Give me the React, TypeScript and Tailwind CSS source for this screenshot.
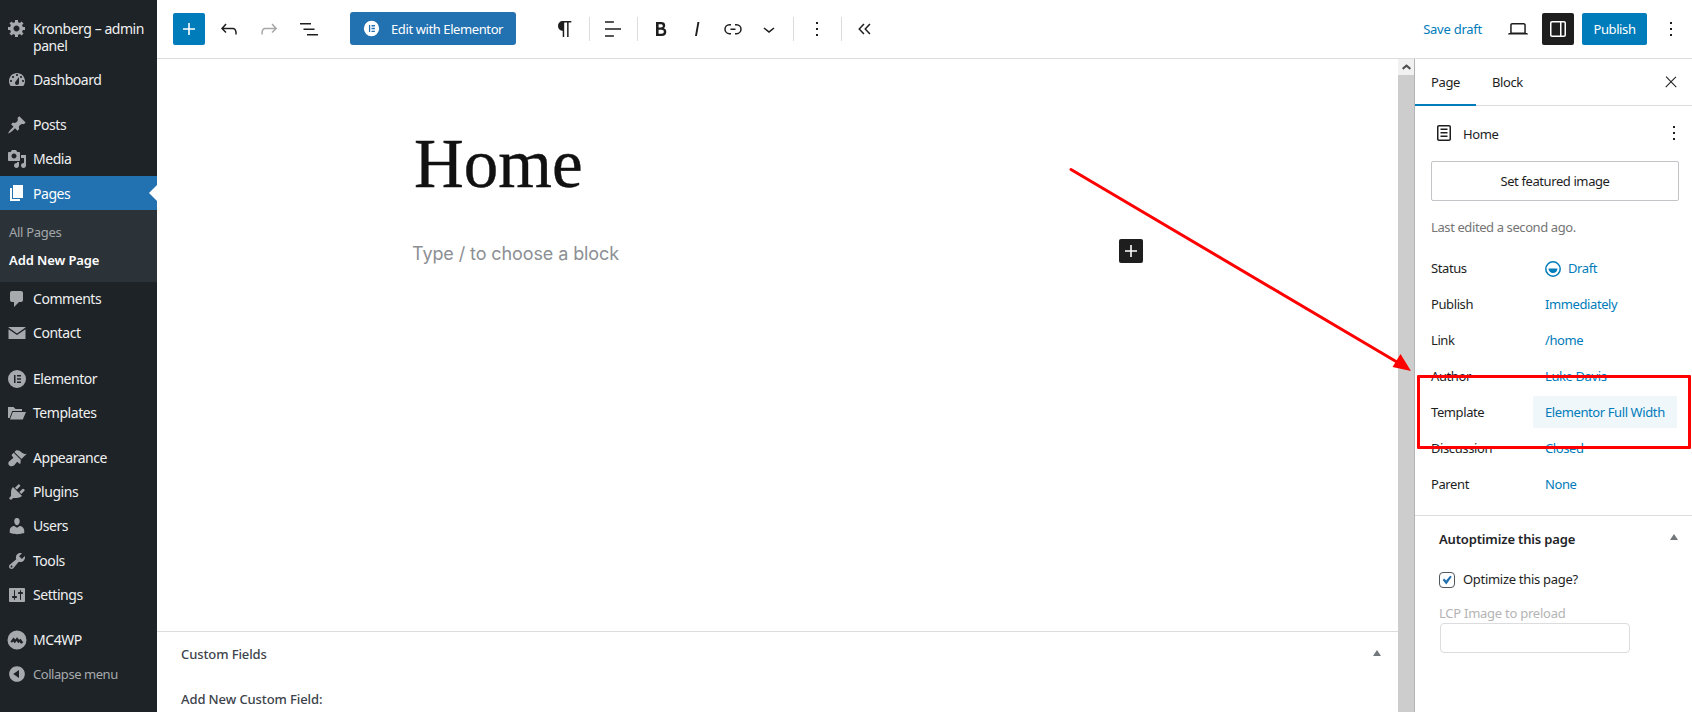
import React from "react";

const D = {
  gear: "M18 12h-2.18c-.17.7-.44 1.35-.81 1.93l1.54 1.54-2.1 2.1-1.54-1.54c-.58.36-1.23.63-1.91.79V19H8v-2.18c-.68-.16-1.33-.43-1.91-.79l-1.54 1.54-2.12-2.12 1.54-1.54c-.36-.58-.63-1.23-.79-1.91H1V9.03h2.17c.16-.7.44-1.35.8-1.94L2.43 5.55l2.1-2.1 1.54 1.54c.58-.37 1.24-.64 1.93-.81V2h3v2.18c.68.16 1.33.43 1.91.79l1.54-1.54 2.12 2.12-1.54 1.54c.36.59.64 1.24.8 1.94H18V12zm-8.5 1.5c1.66 0 3-1.34 3-3s-1.34-3-3-3-3 1.34-3 3 1.34 3 3 3z",
  dash: "M3.76 16h12.48c1.1-1.37 1.76-3.11 1.76-5 0-4.42-3.58-8-8-8s-8 3.58-8 8c0 1.89.66 3.63 1.76 5zM10 4c.55 0 1 .45 1 1s-.45 1-1 1-1-.45-1-1 .45-1 1-1zM6 6c.55 0 1 .45 1 1s-.45 1-1 1-1-.45-1-1 .45-1 1-1zm8 0c.55 0 1 .45 1 1s-.45 1-1 1-1-.45-1-1 .45-1 1-1zm-5.37 5.55L12 7v6c0 1.1-.9 2-2 2s-2-.9-2-2c0-.57.24-1.08.63-1.45zM4 10c.55 0 1 .45 1 1s-.45 1-1 1-1-.45-1-1 .45-1 1-1zm12 0c.55 0 1 .45 1 1s-.45 1-1 1-1-.45-1-1 .45-1 1-1z",
  pin: "M10.44 3.02l1.82-1.82 6.36 6.35-1.83 1.82c-1.05-.68-2.48-.57-3.41.36l-.75.75c-.92.93-1.04 2.35-.35 3.41l-1.83 1.82-2.41-2.41-2.8 2.79c-.42.42-3.38 2.71-3.8 2.29s1.86-3.39 2.28-3.81l2.79-2.79L4.1 9.36l1.83-1.82c1.05.69 2.48.57 3.4-.36l.75-.75c.93-.92 1.05-2.35.36-3.41z",
  media: "M13 11V4c0-.55-.45-1-1-1h-1.67L9 1H5L3.67 3H2c-.55 0-1 .45-1 1v7c0 .55.45 1 1 1h10c.55 0 1-.45 1-1zM7 4.5c1.38 0 2.5 1.12 2.5 2.5S8.38 9.5 7 9.5 4.5 8.38 4.5 7 5.62 4.5 7 4.5zM14 6h5v10.5c0 1.38-1.12 2.5-2.5 2.5S14 17.88 14 16.5s1.12-2.5 2.5-2.5c.17 0 .34.02.5.05V9h-3V6zm-4 8.05V13h2v3.5c0 1.38-1.12 2.5-2.5 2.5S7 17.88 7 16.5 8.12 14 9.5 14c.17 0 .34.02.5.05z",
  page: "M6 15V2h10v13H6zm-1 1h8v2H3V5h2v11z",
  comment: "M5 2h9c1.1 0 2 .9 2 2v7c0 1.1-.9 2-2 2h-2l-5 5v-5H5c-1.1 0-2-.9-2-2V4c0-1.1.9-2 2-2z",
  mail: "M1.5 4h17v.6L10 10.4 1.5 4.6zM1.5 6.3L10 12.1l8.5-5.8V16h-17z",
  elementor: "M10 1a9 9 0 1 0 0 18 9 9 0 0 0 0-18zM7 6h1.5v8H7zM10 6h4v1.5h-4zM10 9.25h4v1.5h-4zM10 12.5h4V14h-4z",
  folder: "M1 4h5.5l2 2H15v2H5.2L2.6 15H1zM5.8 9H19l-3.2 7.5H3z",
  brush: "M14.48 11.06L7.41 3.99l1.5-1.5c.5-.56 2.3-.47 3.51.32 1.21.8 1.43 1.28 2.91 2.1 1.18.64 2.45 1.26 4.45.85zm-.71.71L6.7 4.7 4.93 6.47c-.39.39-.39 1.02 0 1.41l1.06 1.06c.39.39.39 1.03 0 1.42-.6.6-1.43 1.11-2.21 1.69-.35.26-.7.53-1.01.84C1.43 13.23.78 15.6 1.82 17.1c.99 1.43 3.31 1.7 5.15.52.39-.31.66-.66.92-1.01.58-.78 1.09-1.61 1.69-2.21.39-.39 1.02-.39 1.41 0l1.06 1.06c.39.39 1.02.39 1.41 0z",
  plug: "M13.11 4.36L9.87 7.6 8 5.73l3.24-3.24c.35-.34 1.05-.2 1.56.32.52.51.66 1.21.31 1.55zm-8 1.77l.91-1.12 9.01 9.01-1.19.84c-.71.71-2.63 1.16-3.82 1.16H6.14L4.9 17.26c-.59.59-1.54.59-2.12 0-.59-.58-.59-1.53 0-2.12l1.24-1.24v-3.88c0-1.13.4-3.19 1.09-3.89zm7.26 3.97l3.24-3.24c.34-.35 1.04-.21 1.55.31.52.51.66 1.21.31 1.55l-3.24 3.25z",
  user: "M10 9.25c-2.27 0-2.73-3.44-2.73-3.44C7 4.02 7.82 2 9.97 2c2.16 0 2.98 2.02 2.71 3.81 0 0-.41 3.44-2.68 3.44zm0 2.57L12.72 10c2.39 0 4.52 2.33 4.52 4.53v2.49s-3.65 1.13-7.24 1.13c-3.65 0-7.24-1.13-7.24-1.13v-2.49c0-2.25 1.94-4.48 4.47-4.48z",
  tool: "M16.68 9.77c-1.34 1.34-3.3 1.67-4.95.99l-5.41 6.52c-.99.99-2.59.99-3.58 0s-.99-2.59 0-3.57l6.52-5.42c-.68-1.65-.35-3.61.99-4.95 1.28-1.28 3.12-1.62 4.72-1.06l-2.89 2.89 2.82 2.82 2.86-2.87c.53 1.58.18 3.39-1.08 4.65zM3.81 16.21c.4.39 1.04.39 1.43 0 .4-.4.4-1.04 0-1.43-.39-.4-1.03-.4-1.43 0-.39.39-.39 1.03 0 1.43z",
  settings: "M18 16V4c0-.55-.45-1-1-1H3c-.55 0-1 .45-1 1v12c0 .55.45 1 1 1h14c.55 0 1-.45 1-1zM8 11h1c.55 0 1 .45 1 1s-.45 1-1 1H8v1.5c0 .28-.22.5-.5.5s-.5-.22-.5-.5V13H6c-.55 0-1-.45-1-1s.45-1 1-1h1V5.5c0-.28.22-.5.5-.5s.5.22.5.5V11zm5-2h-1c-.55 0-1-.45-1-1s.45-1 1-1h1V5.5c0-.28.22-.5.5-.5s.5.22.5.5V7h1c.55 0 1 .45 1 1s-.45 1-1 1h-1v5.5c0 .28-.22.5-.5.5s-.5-.22-.5-.5V9z",
  mc: "M10 .5a9.5 9.5 0 1 0 0 19 9.5 9.5 0 0 0 0-19zM3.5 11.5L6.5 7.5l1.8 2 1.7-2.3 2.2 2.6 1.3-1 2.8 3.7-2.2 1.2-1.6-1.7-1 1.2-2-2.2-1.6 2.2-1.8-1.8-1.2 1.4z",
  collapse: "M10 2.16c4.33 0 7.84 3.51 7.84 7.84s-3.51 7.84-7.84 7.84S2.16 14.33 2.16 10 5.71 2.16 10 2.16zm2 11.72V6.12L6.18 9.97z",
};

const G = {
  plus: "M18 11.2h-5.2V6h-1.6v5.2H6v1.6h5.2V18h1.6v-5.2H18z",
  undo: "M18.3 11.7c-.6-.6-1.4-.9-2.3-.9H6.7l2.9-3.3-1.1-1-4.5 5L8.5 16l1-1-2.7-2.7H16c.5 0 .9.2 1.3.5 1 1 1 3.4 1 4.5v.3h1.5v-.2c0-1.5 0-4.3-1.5-5.7z",
  redo: "M15.6 6.5l-1.1 1 2.9 3.3H8c-.9 0-1.7.3-2.3.9-1.4 1.5-1.4 4.2-1.4 5.6v.2h1.5v-.3c0-1.1 0-3.5 1-4.5.3-.3.7-.5 1.3-.5h9.2L14.5 15l1.1 1.1 4.6-4.6-4.6-5z",
  list: "M3 6h11v1.5H3V6zm3.5 5.5h11V13h-11v-1.5zM21 17H10v1.5h11V17z",
  para: "M18.3 4H9.9v-.1l-.9.2c-2.3.4-4 2.4-4 4.8s1.7 4.4 4 4.8l.7.1V20h1.5V5.5h2.9V20h1.5V5.5h2.7V4z",
  align: "M4 19.8h8.9v-1.5H4v1.5zm8.9-15.6H4v1.5h8.9V4.2zm-8.9 7v1.5h16v-1.5H4z",
  bold: "M14.7 11.3c1-.6 1.5-1.6 1.5-3 0-2.3-1.3-3.4-4-3.4H7v14h5.8c1.4 0 2.5-.3 3.3-1 .8-.7 1.2-1.7 1.2-2.9.1-1.9-.8-3.1-2.6-3.7zm-5.1-4h2.3c.6 0 1.1.1 1.4.4.3.3.5.7.5 1.2s-.2 1-.5 1.2c-.3.3-.8.4-1.4.4H9.6V7.3zm4.6 9c-.4.3-1 .4-1.7.4H9.6v-3.9h2.9c.7 0 1.3.2 1.7.5.4.3.6.8.6 1.5s-.2 1.2-.6 1.5z",
  italic: "M12.5 5L10 19h1.9l2.5-14z",
  link: "M10 17.389H8.444A5.194 5.194 0 1 1 8.444 7H10v1.5H8.444a3.694 3.694 0 0 0 0 7.389H10v1.5ZM14 7h1.556a5.194 5.194 0 0 1 0 10.39H14v-1.5h1.556a3.694 3.694 0 0 0 0-7.39H14V7Zm-4.5 6h5v-1.5h-5V13Z",
  chev: "M17.5 11.6L12 16l-5.5-4.4.9-1.2L12 14l4.5-3.6 1 1.2z",
  more: "M13 19h-2v-2h2v2zm0-6h-2v-2h2v2zm0-6h-2V5h2v2z",
  collapse: "M11.4 6.5l-5.2 5.5 5.2 5.5 1.1-1-4.3-4.5 4.3-4.5zM17.4 6.5l-5.2 5.5 5.2 5.5 1.1-1-4.3-4.5 4.3-4.5z",
  laptop: "M20.5 16h-.7V8c0-1.1-.9-2-2-2H6.2c-1.1 0-2 .9-2 2v8h-.7c-.8 0-1.5.7-1.5 1.5h20c0-.8-.7-1.5-1.5-1.5zM5.7 8c0-.3.2-.5.5-.5h11.6c.3 0 .5.2.5.5v7.6H5.7V8z",
  sidebar: "M18 4H6c-1.1 0-2 .9-2 2v12c0 1.1.9 2 2 2h12c1.1 0 2-.9 2-2V6c0-1.1-.9-2-2-2zm-4 14.5H6c-.3 0-.5-.2-.5-.5V6c0-.3.2-.5.5-.5h8v13zm4.5-.5c0 .3-.2.5-.5.5h-2.5v-13H18c.3 0 .5.2.5.5v12z",
  doc: "M15.5 7.5h-7V9h7V7.5zm-7 3.5h7v1.5h-7V11zm7 3.5h-7V16h7v-1.5zM17 4H7c-1.1 0-2 .9-2 2v12c0 1.1.9 2 2 2h10c1.1 0 2-.9 2-2V6c0-1.1-.9-2-2-2zm.5 14c0 .3-.2.5-.5.5H7c-.3 0-.5-.2-.5-.5V6c0-.3.2-.5.5-.5h10c.3 0 .5.2.5.5v12z",
  close: "M13 11.8l6.1-6.3-1-1-6.1 6.2-6.1-6.3-1 1 6.1 6.3-6.5 6.7 1 1 6.5-6.6 6.5 6.6 1-1z",
};

function Dash({ d, className }: { d: string; className?: string }) {
  return (
    <svg viewBox="0 0 20 20" className={className ?? "w-5 h-5"} fill="currentColor" fillRule="evenodd">
      <path d={d} />
    </svg>
  );
}

function Gb({ d, size = 24, className }: { d: string; size?: number; className?: string }) {
  return (
    <svg viewBox="0 0 24 24" width={size} height={size} className={className} fill="currentColor">
      <path d={d} />
    </svg>
  );
}

function MenuItem({ icon, label, active, dim }: { icon: string; label: string; active?: boolean; dim?: boolean }) {
  return (
    <div className={`relative flex items-center h-[34px] ${active ? "bg-[#2271b1] text-white" : dim ? "text-[#a7aaad]" : "text-[#f0f0f1]"}`}>
      <span className={`w-[33px] flex justify-center pl-[1px] shrink-0 ${active ? "text-white" : "text-[#a7aaad]"}`}>
        <Dash d={icon} />
      </span>
      <span className={dim ? "text-[13px]" : active ? "pt-[1px]" : ""}>{label}</span>
      {active && (
        <span className="absolute right-0 top-[9px] w-0 h-0 border-y-[8px] border-y-transparent border-r-[8px] border-r-white" />
      )}
    </div>
  );
}

function Sidebar() {
  return (
    <aside className="w-[157px] shrink-0 bg-[#1d2327] text-[14px] leading-[18px] tracking-[-0.45px] h-[712px] overflow-hidden">
      <div className="flex h-[63px] pt-[20px] text-[#f0f0f1]">
        <span className="w-[33px] flex justify-center pl-[1px] text-[#a7aaad] shrink-0 h-5 mt-[-2px]">
          <Dash d={D.gear} />
        </span>
        <span className="w-[118px] leading-[17px]">Kronberg – admin panel</span>
      </div>
      <MenuItem icon={D.dash} label="Dashboard" />
      <div className="h-[11px]" />
      <MenuItem icon={D.pin} label="Posts" />
      <MenuItem icon={D.media} label="Media" />
      <MenuItem icon={D.page} label="Pages" active />
      <div className="h-[72px] bg-[#2c3338] flex flex-col justify-center pl-[9px] text-[13px] gap-[10px] tracking-[-0.3px]">
        <span className="text-[#a3a7ab]">All Pages</span>
        <span className="text-white font-semibold tracking-[-0.1px]">Add New Page</span>
      </div>
      <MenuItem icon={D.comment} label="Comments" />
      <MenuItem icon={D.mail} label="Contact" />
      <div className="h-[12px]" />
      <MenuItem icon={D.elementor} label="Elementor" />
      <MenuItem icon={D.folder} label="Templates" />
      <div className="h-[11px]" />
      <MenuItem icon={D.brush} label="Appearance" />
      <MenuItem icon={D.plug} label="Plugins" />
      <MenuItem icon={D.user} label="Users" />
      <div className="h-px" />
      <MenuItem icon={D.tool} label="Tools" />
      <MenuItem icon={D.settings} label="Settings" />
      <div className="h-[11px]" />
      <MenuItem icon={D.mc} label="MC4WP" />
      <MenuItem icon={D.collapse} label="Collapse menu" dim />
    </aside>
  );
}

function Divider() {
  return <span className="w-px h-6 bg-[#dcdcde] shrink-0" />;
}

function ToolBtn({ d, w, className }: { d: string; w: string; className?: string }) {
  return <span className={`${w} h-8 flex items-center justify-center shrink-0 ${className ?? "text-[#1e1e1e]"}`}><Gb d={d} /></span>;
}

function TopBar() {
  return (
    <header className="h-[59px] shrink-0 border-b border-[#dcdcde] bg-white flex items-center pl-[16px] pb-[1px]">
      <span className="w-8 h-8 rounded-[2px] bg-[#007cba] text-white flex items-center justify-center shrink-0"><Gb d={G.plus} /></span>
      <span className="w-[4px] shrink-0" />
      <ToolBtn d={G.undo} w="w-10" />
      <ToolBtn d={G.redo} w="w-10" className="text-[#a8a8a8]" />
      <ToolBtn d={G.list} w="w-10" />
      <span className="ml-[21px] w-[166px] h-[33px] rounded-[3px] bg-[#2271b1] text-white flex items-center pl-[13px] text-[13px] tracking-[-0.4px] shrink-0">
        <svg viewBox="0 0 20 20" className="w-[17px] h-[17px] mr-[11px] shrink-0" fill="#fff" fillRule="evenodd"><path d={D.elementor} /></svg>
        <span className="pt-[2px]">Edit with Elementor</span>
      </span>
      <ToolBtn d={G.para} w="w-10" className="ml-[29px] text-[#1e1e1e]" />
      <span className="w-1 shrink-0" />
      <Divider />
      <span className="w-[3px] shrink-0" />
      <ToolBtn d={G.align} w="w-10" />
      <span className="w-[4px] shrink-0" />
      <Divider />
      <span className="w-[5px] shrink-0" />
      <ToolBtn d={G.bold} w="w-9" />
      <ToolBtn d={G.italic} w="w-9" />
      <ToolBtn d={G.link} w="w-9" />
      <ToolBtn d={G.chev} w="w-9" />
      <span className="w-[6px] shrink-0" />
      <Divider />
      <span className="w-[5px] shrink-0" />
      <ToolBtn d={G.more} w="w-9" />
      <span className="w-[6px] shrink-0" />
      <Divider />
      <span className="w-[4px] shrink-0" />
      <ToolBtn d={G.collapse} w="w-9" />
      <div className="flex-1" />
      <span className="text-[13px] tracking-[-0.25px] text-[#007cba] mr-[20px] pt-[2px]">Save draft</span>
      <ToolBtn d={G.laptop} w="w-8" />
      <span className="w-[8px] shrink-0" />
      <span className="w-8 h-8 rounded-[2px] bg-[#1e1e1e] text-white flex items-center justify-center shrink-0"><Gb d={G.sidebar} /></span>
      <span className="w-[8px] shrink-0" />
      <span className="w-[65px] h-8 rounded-[2px] bg-[#007cba] text-white text-[13px] tracking-[-0.4px] flex items-center justify-center shrink-0 pt-[2px]">Publish</span>
      <span className="w-[8px] shrink-0" />
      <ToolBtn d={G.more} w="w-8" />
      <span className="w-[5px] shrink-0" />
    </header>
  );
}

function Triangle() {
  return <span className="w-0 h-0 border-x-[4px] border-x-transparent border-b-[6px] border-b-[#72777c]" />;
}

function Editor() {
  return (
    <main className="flex-1 min-w-0 flex flex-col bg-white">
      <div className="flex-1 min-h-0 px-[255px] pt-[59px] relative">
        <h1 className="font-['Liberation_Serif',serif] text-[69px] leading-[92px] text-[#111] h-[92px] pl-[2px] [-webkit-text-stroke:0.4px_#111]">Home</h1>
        <div className="flex items-center justify-between mt-[24px] h-[36px] w-[731px]">
          <span className="font-['Inter',sans-serif] text-[18px] tracking-[-0.1px] text-[#8c8f94] pt-[3px]">Type / to choose a block</span>
          <span className="w-6 h-6 mb-[2px] rounded-[2px] bg-[#1e1e1e] text-white flex items-center justify-center"><Gb d={G.plus} /></span>
        </div>
      </div>
      <section className="h-[81px] shrink-0 border-t border-[#dcdcde] px-[24px] text-[13px] tracking-[-0.1px] text-[#3c434a] overflow-hidden">
        <div className="flex items-center justify-between h-[44px]">
          <span className="font-medium pt-[2px]">Custom Fields</span>
          <span className="mr-[-7px] mb-[2px] flex"><Triangle /></span>
        </div>
        <div className="font-medium leading-[46px]">Add New Custom Field:</div>
      </section>
    </main>
  );
}

function Scrollbar() {
  return (
    <div className="w-[17px] shrink-0 border-r border-[#b4b4b4] bg-[#cdcdcd] flex flex-col">
      <div className="h-4 bg-[#f1f1f1] flex items-center justify-center text-[#505050]">
        <svg viewBox="0 0 10 6" className="w-[9px] h-[6px]" fill="currentColor"><path d="M5 0l5 4.2L8.6 6 5 3 1.4 6 0 4.2z" /></svg>
      </div>
    </div>
  );
}

const rows: [string, string][] = [
  ["Publish", "Immediately"],
  ["Link", "/home"],
  ["Author", "Luke Davis"],
];

function Row({ label, children }: { label: string; children: React.ReactNode }) {
  return (
    <div className="h-9 flex items-center">
      <span className="w-[114px] shrink-0 text-[#1e1e1e] pt-[2px]">{label}</span>
      {children}
    </div>
  );
}

function Panel() {
  return (
    <aside className="w-[277px] shrink-0 bg-white text-[13px] tracking-[-0.4px] text-[#1e1e1e] overflow-hidden">
      <div className="h-[47px] border-b border-[#dcdcde] flex items-stretch">
        <span className="w-[61px] border-b-2 border-[#007cba] flex items-center justify-center h-[47px] pt-[3px]">Page</span>
        <span className="ml-[16px] flex items-center pt-[2px]">Block</span>
        <span className="ml-auto mr-[12px] flex items-center"><Gb d={G.close} size={18} /></span>
      </div>
      <div className="pl-[16px] pr-[13px]">
        <div className="h-[54px] flex items-center">
          <Gb d={G.doc} className="ml-[1px] mr-[7px]" />
          <span className="pt-[3px]">Home</span>
          <span className="ml-auto mr-[-7px]"><Gb d={G.more} /></span>
        </div>
        <div className="mt-[1px] h-[40px] border border-[#c3c4c7] rounded-[2px] flex items-center justify-center pt-[2px]">Set featured image</div>
        <div className="mt-[16px] h-5 leading-5 text-[#757575]">Last edited a second ago.</div>
        <div className="mt-[13px]">
          <Row label="Status">
            <span className="flex items-center text-[#007cba] pt-[2px]">
              <svg viewBox="0 0 16 16" className="w-4 h-4 mr-[7px] shrink-0" fill="none">
                <circle cx="8" cy="8" r="7.2" stroke="currentColor" strokeWidth="1.5" />
                <path d="M3.5 7.5h9a4.5 4.5 0 0 1-9 0z" fill="currentColor" />
              </svg>
              Draft
            </span>
          </Row>
          {rows.map(([l, v]) => (
            <Row key={l} label={l}><span className="text-[#007cba] pt-[2px]">{v}</span></Row>
          ))}
          <Row label="Template">
            <span className="text-[#007cba] -ml-3 h-8 w-[144px] flex items-center pl-3 pt-[2px] rounded-[2px] bg-[#f0f7fb]">Elementor Full Width</span>
          </Row>
          <Row label="Discussion"><span className="text-[#007cba] pt-[2px]">Closed</span></Row>
          <Row label="Parent"><span className="text-[#007cba] pt-[2px]">None</span></Row>
        </div>
      </div>
      <div className="mt-[13px] border-t border-[#dcdcde] px-[24px]">
        <div className="h-[47px] flex items-center justify-between">
          <span className="font-semibold text-[#1d2327] tracking-[-0.15px]">Autoptimize this page</span>
          <span className="mr-[-10px] mb-[5px] flex"><Triangle /></span>
        </div>
        <div className="flex items-center h-6 mt-[5px]">
          <span className="w-4 h-4 border border-[#50575e] rounded-[4px] flex items-center justify-center mr-[8px] mt-[-1px]">
            <svg viewBox="0 0 16 16" className="w-[14px] h-[14px]" fill="#2271b1"><path d="M3 8l1.8-1.6L7 8.6 11.6 3 13.5 4.4 7.2 13z" /></svg>
          </span>
          <span className="tracking-[-0.3px]">Optimize this page?</span>
        </div>
        <div className="mt-[12px] leading-[18px] text-[#b4b4b4] tracking-[-0.25px]">LCP Image to preload</div>
        <div className="ml-[1px] mt-[1px] w-[190px] h-[30px] border border-[#dcdcde] rounded-[4px]" />
      </div>
    </aside>
  );
}

export default function App() {
  return (
    <div className="relative flex w-[1692px] h-[712px] overflow-hidden bg-white font-['Noto_Sans',sans-serif]">
      <Sidebar />
      <div className="flex-1 min-w-0 flex flex-col">
        <TopBar />
        <div className="flex-1 min-h-0 flex">
          <Editor />
          <Scrollbar />
          <Panel />
        </div>
      </div>
      <svg className="absolute left-0 top-0 w-[1692px] h-[712px] pointer-events-none" viewBox="0 0 1692 712">
        <line x1="1071" y1="169.5" x2="1402" y2="365" stroke="#ff0000" strokeWidth="3" strokeLinecap="round" />
        <path d="M1411 371l-18.5-4 8-13z" fill="#ff0000" />
      </svg>
      <div className="absolute left-[1417px] top-[375px] w-[274px] h-[74px] border-[3px] border-[#ff0000] rounded-[1px] pointer-events-none" />
    </div>
  );
}
